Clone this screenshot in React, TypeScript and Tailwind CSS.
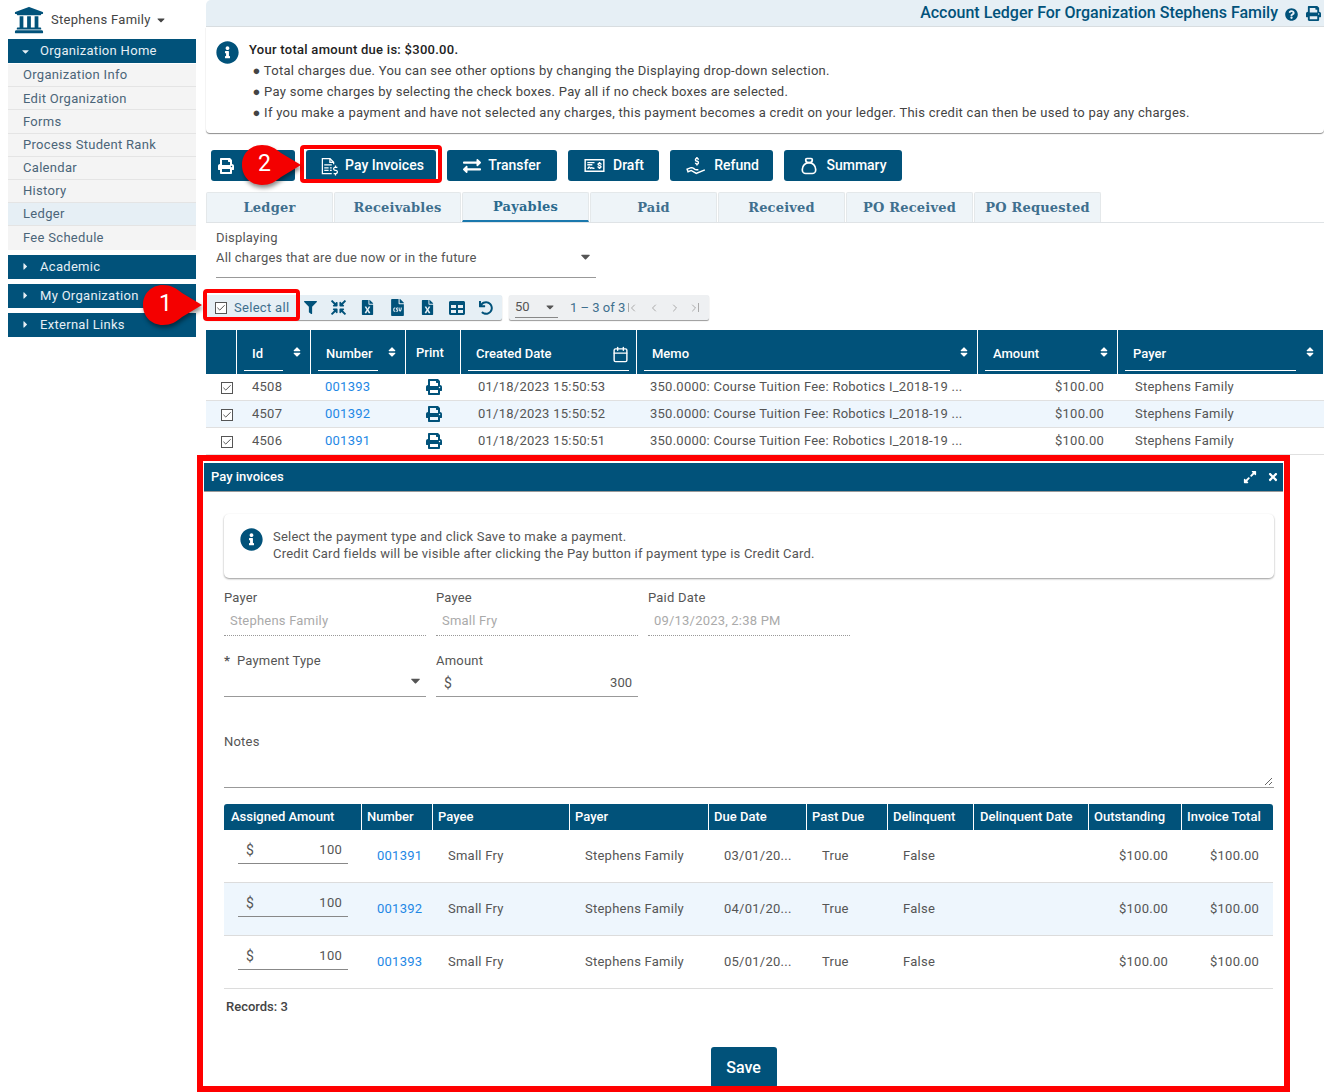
import type { ReactNode } from "react";
import {
  FaCaretDown,
  FaCaretRight,
  FaCompressArrowsAlt,
  FaExchangeAlt,
  FaExpandAlt,
  FaFileCsv,
  FaFileExcel,
  FaFilter,
  FaInfoCircle,
  FaPrint,
  FaQuestionCircle,
  FaSort,
  FaTable,
  FaTimes,
  FaUndo,
  FaUniversity,
} from "react-icons/fa";
import {
  LiaFileInvoiceDollarSolid,
  LiaHandHoldingUsdSolid,
  LiaMoneyCheckAltSolid,
} from "react-icons/lia";
import { TbMoneybag } from "react-icons/tb";
import { LuCalendar, LuCheck, LuChevronLeft, LuChevronRight } from "react-icons/lu";

const menuItems = [
  "Organization Info",
  "Edit Organization",
  "Forms",
  "Process Student Rank",
  "Calendar",
  "History",
  "Ledger",
  "Fee Schedule",
];

const tabs = ["Ledger", "Receivables", "Payables", "Paid", "Received", "PO Received", "PO Requested"];

const ledgerRows = [
  { id: "4508", num: "001393", date: "01/18/2023 15:50:53" },
  { id: "4507", num: "001392", date: "01/18/2023 15:50:52" },
  { id: "4506", num: "001391", date: "01/18/2023 15:50:51" },
];

const invoiceRows = [
  { num: "001391", due: "03/01/20..." },
  { num: "001392", due: "04/01/20..." },
  { num: "001393", due: "05/01/20..." },
];

function SideHead({ label, open }: { label: string; open?: boolean }) {
  return (
    <div className="flex h-[24px] items-center bg-[#01527a] pl-[12px] text-[13px] tracking-[0.3px] text-[#e6eff5]">
      <span className="flex w-[20px] justify-start text-[11px]">
        {open ? <FaCaretDown /> : <FaCaretRight />}
      </span>
      {label}
    </div>
  );
}

function ActionButton({ icon, label, w }: { icon: ReactNode; label: string; w: string }) {
  return (
    <button className={`flex h-[31px] items-center justify-center gap-[7px] rounded-[3px] bg-[#01527a] text-[14px] font-medium text-white ${w}`}>
      {icon}
      <span>{label}</span>
    </button>
  );
}

function Check() {
  return (
    <span className="flex h-[12px] w-[12px] items-center justify-center border border-[#555] bg-white text-[#333]">
      <LuCheck size={10} strokeWidth={2} />
    </span>
  );
}

function HeadCell({ label, w, sort, children }: { label: string; w: string; sort?: boolean; children?: ReactNode }) {
  return (
    <div className={`flex h-full shrink-0 items-center border-r border-white px-[7px] ${w}`}>
      <div className="flex h-[29px] w-full items-center justify-between border-b border-white pb-[4px] pl-[8px] pr-[0px] text-[13px] font-medium mt-[9px]">
        <span>{label}</span>
        {children}
      </div>
      {sort && <FaSort size={12} className="ml-[8px] shrink-0" />}
    </div>
  );
}

function Field({ label, value, w }: { label: string; value: string; w: string }) {
  return (
    <div className={w}>
      <div className="text-[13px] tracking-[0.2px] text-[#555]">{label}</div>
      <div className="mt-[3px] h-[25px] border-b border-dotted border-[#999] pl-[6px] text-[13px] tracking-[0.2px] text-[#aaa]">
        {value}
      </div>
    </div>
  );
}

function Callout({ n, className }: { n: string; className: string }) {
  return (
    <div className={`absolute h-[42px] w-[60px] ${className}`}>
      <svg width="60" height="42" viewBox="0 0 60 42" className="absolute inset-0 drop-shadow-[1px_3px_2px_rgba(0,0,0,0.45)]">
        <path d="M21 1 C29 1 34 4 40 9 L60 21 L40 33 C34 38 29 41 21 41 C9 41 1 32 1 21 C1 10 9 1 21 1 Z" fill="#f40000" />
      </svg>
      <span className="absolute left-[17px] top-[6px] text-[23px] leading-[28px] text-white">{n}</span>
    </div>
  );
}

export default function App() {
  return (
    <div className="relative flex h-[1092px] w-[1324px] overflow-hidden bg-white font-['Roboto',sans-serif] text-[#444]">
      {/* Sidebar */}
      <aside className="ml-[8px] w-[188px] shrink-0">
        <div className="flex h-[39px] items-center pl-[6px] text-[13px] text-[#444]">
          <FaUniversity size={30} className="text-[#01527a]" />
          <span className="ml-[7px] tracking-[0.3px]">Stephens Family</span>
          <FaCaretDown size={12} className="ml-[4px]" />
        </div>
        <div className="h-[25px]">
          <SideHead label="Organization Home" open />
        </div>
        <div className="bg-[#f4f4f4]">
          {menuItems.map((item) => (
            <div
              key={item}
              className={`flex h-[23.2px] items-center border-b border-[#e4e4e4] pl-[15px] text-[13px] tracking-[0.3px] text-[#4b6579] last:border-b-0 ${item === "Ledger" ? "bg-[#e6eff5]" : ""}`}
            >
              {item}
            </div>
          ))}
        </div>
        <div className="mt-[5px] flex flex-col gap-[5px]">
          <SideHead label="Academic" />
          <SideHead label="My Organization" />
          <SideHead label="External Links" />
        </div>
      </aside>

      {/* Main */}
      <main className="ml-[10px] w-[1118px] shrink-0">
        <div className="flex h-[27px] items-center justify-end rounded-tl-[5px] border-b border-[#d8dde0] bg-[#e6eff5] pr-[3px] text-[#01527a]">
          <span className="text-[16px] font-medium">Account Ledger For Organization Stephens Family</span>
          <FaQuestionCircle size={13} className="ml-[7px] mt-[2px]" />
          <FaPrint size={15} className="ml-[8px]" />
        </div>

        <div className="flex h-[106px] rounded-b-[4px] pl-[10px] pt-[13px] shadow-[0_1px_1px_rgba(0,0,0,0.45)]">
          <FaInfoCircle size={23} className="mt-[1px] shrink-0 text-[#01527a]" />
          <div className="ml-[10px] text-[13px] tracking-[0.27px] text-[#444]">
            <div className="h-[21px] font-medium text-[#222]">Your total amount due is: $300.00.</div>
            <div className="h-[21px]">&nbsp;● Total charges due. You can see other options by changing the Displaying drop-down selection.</div>
            <div className="h-[21px]">&nbsp;● Pay some charges by selecting the check boxes. Pay all if no check boxes are selected.</div>
            <div className="h-[21px]">&nbsp;● If you make a payment and have not selected any charges, this payment becomes a credit on your ledger. This credit can then be used to pay any charges.</div>
          </div>
        </div>

        <div className="mt-[17px] ml-[5px] flex gap-[11px]">
          <ActionButton w="w-[84px]" label="" icon={<FaPrint size={16} className="mr-[48px]" />} />
          <ActionButton w="w-[130px]" label="Pay Invoices" icon={<LiaFileInvoiceDollarSolid size={20} />} />
          <ActionButton w="w-[110px]" label="Transfer" icon={<FaExchangeAlt size={18} />} />
          <ActionButton w="w-[91px]" label="Draft" icon={<LiaMoneyCheckAltSolid size={23} />} />
          <ActionButton w="w-[103px]" label="Refund" icon={<LiaHandHoldingUsdSolid size={23} />} />
          <ActionButton w="w-[118px]" label="Summary" icon={<TbMoneybag size={20} />} />
        </div>

        <div className="mt-[11px] flex h-[31px] gap-[1px] border-b border-[#dfe3e6]">
          {tabs.map((t) => (
            <div
              key={t}
              className={`flex h-[30px] w-[127px] items-center justify-center rounded-t-[2px] border border-b-0 border-[#e4e8ea] bg-[#eef4f8] font-['DejaVu_Serif',serif] text-[13px] font-bold tracking-[0.2px] text-[#3f6f8e] ${t === "Payables" ? "border-b-2 border-b-[#1a78ad] bg-[#eef4f8] !text-[#2b6a8e]" : ""}`}
            >
              {t}
            </div>
          ))}
        </div>

        <div className="ml-[10px] mt-[6px] w-[380px]">
          <div className="text-[13px] leading-[17px] tracking-[0.2px] text-[#555]">Displaying</div>
          <div className="mt-[3px] flex h-[29px] items-start justify-between border-b border-[#999] pr-[3px] text-[13px] leading-[18px] tracking-[0.2px] text-[#555]">
            All charges that are due now or in the future
            <FaCaretDown size={15} className="mt-[0px] text-[#555]" />
          </div>
        </div>

        <div className="mt-[17px] flex h-[25px] items-center text-[#01527a]">
          <div className="flex h-[25px] w-[296px] items-center rounded-[2px] bg-[#e6eff5] shadow-[0_1px_1px_rgba(0,0,0,0.4)]">
            <div className="flex w-[92px] items-center pl-[9px] text-[13px] tracking-[0.3px] text-[#3f6f8e]">
              <Check />
              <span className="ml-[7px]">Select all</span>
            </div>
            <div className="ml-[6px] flex items-center gap-[14px]">
              <FaFilter size={13} />
              <FaCompressArrowsAlt size={15} />
              <FaFileExcel size={15} />
              <FaFileCsv size={17} />
              <FaFileExcel size={15} />
              <FaTable size={16} />
              <FaUndo size={14} />
            </div>
          </div>
          <div className="ml-[7px] flex h-[25px] w-[200px] items-center rounded-[2px] bg-[#eef0f2] pl-[6px] text-[13px] shadow-[0_1px_1px_rgba(0,0,0,0.4)]">
            <div className="flex w-[43px] items-center justify-between border-b border-[#888] text-[#555]">
              50
              <FaCaretDown size={12} className="mr-[2px]" />
            </div>
            <span className="ml-[12px] text-[#3f6f8e]">1 – 3 of 3</span>
            <div className="ml-[3px] flex items-center gap-[5px] text-[#aaa]">
              <span className="flex items-center"><span className="h-[9px] w-[1px] bg-[#aaa]" /><LuChevronLeft size={12} className="-ml-[2px]" /></span>
              <LuChevronLeft size={12} className="ml-[4px]" />
              <LuChevronRight size={12} className="ml-[4px]" />
              <span className="ml-[2px] flex items-center"><LuChevronRight size={12} className="-mr-[2px]" /><span className="h-[9px] w-[1px] bg-[#aaa]" /></span>
            </div>
          </div>
        </div>

        {/* Ledger table */}
        <div className="mt-[10px]">
          <div className="flex h-[44px] bg-[#01527a] text-white">
            <div className="h-full w-[31px] shrink-0 border-r border-white" />
            <HeadCell label="Id" w="w-[74px]" sort />
            <HeadCell label="Number" w="w-[95px]" sort />
            <div className="flex h-full w-[55px] shrink-0 items-center border-r border-white pl-[10px] pt-[2px] text-[13px] font-medium">Print</div>
            <HeadCell label="Created Date" w="w-[176px]">
              <LuCalendar size={17} />
            </HeadCell>
            <HeadCell label="Memo" w="w-[341px]" sort />
            <HeadCell label="Amount" w="w-[140px]" sort />
            <HeadCell label="Payer" w="w-[206px]" sort />
          </div>
          {ledgerRows.map((r, i) => (
            <div
              key={r.id}
              className={`flex h-[27px] items-center border-b border-[#e0e0e0] text-[13px] tracking-[0.25px] text-[#555] ${i === 1 ? "bg-[#eef6fd]" : ""}`}
            >
              <div className="flex w-[31px] shrink-0 justify-center pl-[10px] pt-[2px]"><Check /></div>
              <div className="w-[74px] shrink-0 pl-[15px]">{r.id}</div>
              <div className="w-[95px] shrink-0 pl-[14px] text-[#1e88e5]">{r.num}</div>
              <div className="flex w-[55px] shrink-0 justify-center text-[#01527a]"><FaPrint size={16} /></div>
              <div className="w-[176px] shrink-0 pl-[17px]">{r.date}</div>
              <div className="w-[341px] shrink-0 pl-[13px]">350.0000: Course Tuition Fee: Robotics I_2018-19 ...</div>
              <div className="w-[140px] shrink-0 pr-[14px] text-right">$100.00</div>
              <div className="pl-[17px]">Stephens Family</div>
            </div>
          ))}
        </div>

        {/* Pay invoices dialog */}
        <div className="relative -ml-[2px] mt-[8px] w-[1079px] bg-white">
          <div className="flex h-[29px] items-center justify-between border-b border-[#999] bg-[#01527a] pl-[7px] pr-[4px] text-[13px] font-medium text-white">
            <span>Pay invoices</span>
            <span className="flex items-center gap-[10px]">
              <FaExpandAlt size={14} />
              <FaTimes size={12} />
            </span>
          </div>

          <div className="px-[20px] pt-[22px]">
            <div className="flex h-[64px] w-[1050px] rounded-[5px] pl-[16px] pt-[14px] shadow-[0_1px_2px_rgba(0,0,0,0.4)]">
              <FaInfoCircle size={23} className="shrink-0 text-[#01527a]" />
              <div className="ml-[10px] text-[13px] leading-[17px] tracking-[0.22px] text-[#555]">
                <div>Select the payment type and click Save to make a payment.</div>
                <div>Credit Card fields will be visible after clicking the Pay button if payment type is Credit Card.</div>
              </div>
            </div>

            <div className="mt-[10px] flex gap-[10px]">
              <Field w="w-[202px]" label="Payer" value="Stephens Family" />
              <Field w="w-[202px]" label="Payee" value="Small Fry" />
              <Field w="w-[202px]" label="Paid Date" value="09/13/2023, 2:38 PM" />
            </div>

            <div className="mt-[15px] flex gap-[10px]">
              <div className="w-[202px]">
                <div className="text-[13px] tracking-[0.2px] text-[#555]"><b className="font-bold">*</b>&nbsp; Payment Type</div>
                <div className="mt-[3px] flex h-[24px] justify-end border-b border-[#999] pr-[3px] text-[#555]">
                  <FaCaretDown size={15} />
                </div>
              </div>
              <div className="w-[202px]">
                <div className="text-[13px] tracking-[0.2px] text-[#555]">Amount</div>
                <div className="mt-[3px] flex h-[24px] items-start justify-between border-b border-[#999] pl-[8px] pr-[6px] text-[13px] text-[#555]">
                  <span className="text-[14px]">$</span>300
                </div>
              </div>
            </div>

            <div className="mt-[35px] text-[13px] tracking-[0.2px] text-[#555]">Notes</div>
            <div className="relative mt-[3px] h-[33px] w-[1050px] border-b border-[#999]">
              <svg width="9" height="9" viewBox="0 0 9 9" className="absolute bottom-[1px] right-[1px] text-[#666]">
                <path d="M8 1 L1 8 M8 5 L5 8" stroke="currentColor" strokeWidth="1" />
              </svg>
            </div>

            <div className="mt-[16px] w-[1049px]">
              <div className="flex h-[26px] rounded-t-[3px] bg-[#01527a] text-[13px] font-medium text-white">
                {[
                  ["Assigned Amount", "w-[138px] pl-[7px]"],
                  ["Number", "w-[71px] pl-[5px]"],
                  ["Payee", "w-[137px] pl-[5px]"],
                  ["Payer", "w-[139px] pl-[5px]"],
                  ["Due Date", "w-[98px] pl-[5px]"],
                  ["Past Due", "w-[81px] pl-[5px]"],
                  ["Delinquent", "w-[86px] pl-[5px]"],
                  ["Delinquent Date", "w-[115px] pl-[6px]"],
                  ["Outstanding", "w-[93px] pl-[5px]"],
                  ["Invoice Total", "w-[91px] pl-[5px]"],
                ].map(([label, cls]) => (
                  <div key={label} className={`flex items-center border-r border-white last:border-r-0 ${cls}`}>
                    {label}
                  </div>
                ))}
              </div>
              {invoiceRows.map((r, i) => (
                <div
                  key={r.num}
                  className={`flex h-[53px] items-center border-b border-[#dcdcdc] text-[13px] tracking-[0.25px] text-[#555] ${i === 1 ? "bg-[#eef6fd]" : ""}`}
                >
                  <div className="w-[138px] shrink-0 pl-[14px] pr-[14px]">
                    <div className="-mt-[8px] flex h-[24px] items-start justify-between border-b border-[#888] pl-[8px] pr-[6px]">
                      <span className="text-[14px]">$</span>100
                    </div>
                  </div>
                  <div className="w-[71px] shrink-0 pl-[15px] text-[#1e88e5]">{r.num}</div>
                  <div className="w-[137px] shrink-0 pl-[15px]">Small Fry</div>
                  <div className="w-[139px] shrink-0 pl-[15px]">Stephens Family</div>
                  <div className="w-[98px] shrink-0 pl-[15px]">{r.due}</div>
                  <div className="w-[81px] shrink-0 pl-[15px]">True</div>
                  <div className="w-[86px] shrink-0 pl-[15px]">False</div>
                  <div className="w-[115px] shrink-0" />
                  <div className="w-[93px] shrink-0 pr-[14px] text-right">$100.00</div>
                  <div className="w-[91px] shrink-0 pr-[14px] text-right">$100.00</div>
                </div>
              ))}
            </div>

            <div className="mt-[8px] pl-[2px] text-[13px] font-medium text-[#444]">Records: 3</div>
            <div className="mt-[31px] flex justify-center pr-[0px]">
              <button className="h-[41px] w-[66px] rounded-[3px] bg-[#01527a] text-[16px] font-medium text-white">Save</button>
            </div>
          </div>
        </div>
      </main>

      {/* Red annotations over the screenshot */}
      <div className="absolute left-[197px] top-[455px] h-[637px] w-[1093px] border-[6px] border-[#ff0000]" />
      <div className="absolute left-[300px] top-[145px] h-[38px] w-[142px] rounded-[4px] border-[4px] border-[#ff0000]" />
      <div className="absolute left-[203px] top-[289px] h-[32px] w-[97px] rounded-[4px] border-[4px] border-[#ff0000]" />
      <Callout n="1" className="left-[142px] top-[284px]" />
      <Callout n="2" className="left-[241px] top-[144px]" />
    </div>
  );
}
